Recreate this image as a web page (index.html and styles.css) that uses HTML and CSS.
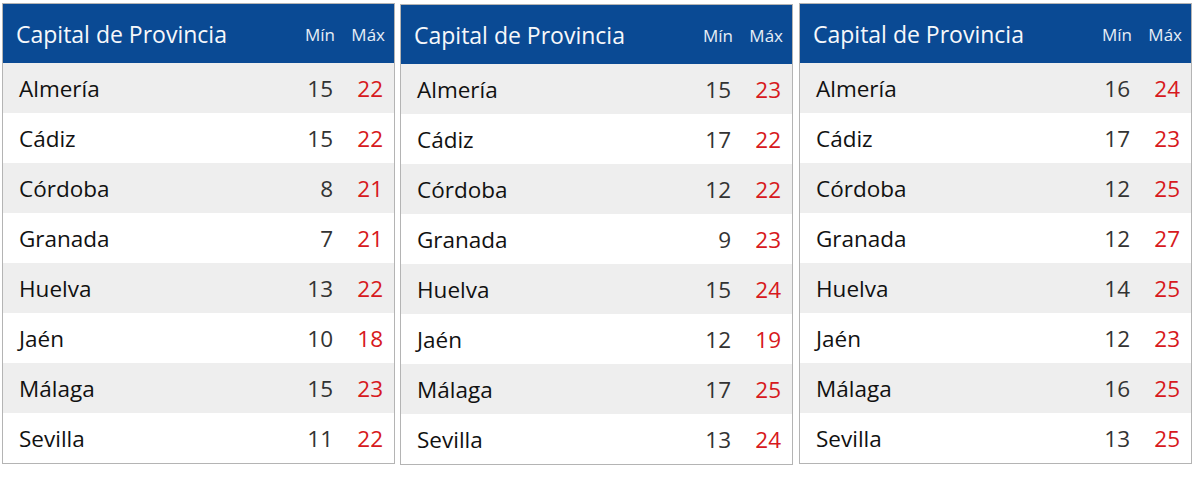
FILE: index.html
```html
<!DOCTYPE html>
<html lang="es">
<head>
<meta charset="utf-8">
<link rel="stylesheet" href="styles.css">
</head>
<body>
<div class="wrap">
  <div class="table t1">
    <div class="head"><span class="title">Capital de Provincia</span><span class="hmin">Mín</span><span class="hmax">Máx</span></div>
    <div class="row"><span class="city">Almería</span><span class="min">15</span><span class="max">22</span></div>
    <div class="row"><span class="city">Cádiz</span><span class="min">15</span><span class="max">22</span></div>
    <div class="row"><span class="city">Córdoba</span><span class="min">8</span><span class="max">21</span></div>
    <div class="row"><span class="city">Granada</span><span class="min">7</span><span class="max">21</span></div>
    <div class="row"><span class="city">Huelva</span><span class="min">13</span><span class="max">22</span></div>
    <div class="row"><span class="city">Jaén</span><span class="min">10</span><span class="max">18</span></div>
    <div class="row"><span class="city">Málaga</span><span class="min">15</span><span class="max">23</span></div>
    <div class="row"><span class="city">Sevilla</span><span class="min">11</span><span class="max">22</span></div>
  </div>
  <div class="table t2">
    <div class="head"><span class="title">Capital de Provincia</span><span class="hmin">Mín</span><span class="hmax">Máx</span></div>
    <div class="row"><span class="city">Almería</span><span class="min">15</span><span class="max">23</span></div>
    <div class="row"><span class="city">Cádiz</span><span class="min">17</span><span class="max">22</span></div>
    <div class="row"><span class="city">Córdoba</span><span class="min">12</span><span class="max">22</span></div>
    <div class="row"><span class="city">Granada</span><span class="min">9</span><span class="max">23</span></div>
    <div class="row"><span class="city">Huelva</span><span class="min">15</span><span class="max">24</span></div>
    <div class="row"><span class="city">Jaén</span><span class="min">12</span><span class="max">19</span></div>
    <div class="row"><span class="city">Málaga</span><span class="min">17</span><span class="max">25</span></div>
    <div class="row"><span class="city">Sevilla</span><span class="min">13</span><span class="max">24</span></div>
  </div>
  <div class="table t3">
    <div class="head"><span class="title">Capital de Provincia</span><span class="hmin">Mín</span><span class="hmax">Máx</span></div>
    <div class="row"><span class="city">Almería</span><span class="min">16</span><span class="max">24</span></div>
    <div class="row"><span class="city">Cádiz</span><span class="min">17</span><span class="max">23</span></div>
    <div class="row"><span class="city">Córdoba</span><span class="min">12</span><span class="max">25</span></div>
    <div class="row"><span class="city">Granada</span><span class="min">12</span><span class="max">27</span></div>
    <div class="row"><span class="city">Huelva</span><span class="min">14</span><span class="max">25</span></div>
    <div class="row"><span class="city">Jaén</span><span class="min">12</span><span class="max">23</span></div>
    <div class="row"><span class="city">Málaga</span><span class="min">16</span><span class="max">25</span></div>
    <div class="row"><span class="city">Sevilla</span><span class="min">13</span><span class="max">25</span></div>
  </div>
</div>
</body>
</html>
```

FILE: styles.css
```css
html, body {
  margin: 0;
  padding: 0;
  background: #ffffff;
}
body {
  font-family: "Open Sans", "Noto Sans", sans-serif;
}
.wrap {
  display: flex;
  align-items: flex-start;
  padding: 3px 0 0 2px;
  gap: 5px;
}
.table {
  width: 391px;
  border: 1px solid #b4b4b4;
  background: #ffffff;
}
.t2 { margin-top: 1px; }
.t3 { margin-left: 1px; }
.head, .row {
  display: grid;
  grid-template-columns: 1fr 44px 50px;
  align-items: center;
}
.head {
  height: 59px;
  padding: 0 9px 0 13px;
  background: #0a4a94;
  color: #ffffff;
}
.title {
  font-size: 23px;
  color: #f6f8fb;
}
.hmin, .hmax {
  font-size: 17px;
  font-weight: 500;
  text-align: right;
  color: #e6eef7;
  padding-top: 2px;
}
.row {
  height: 50px;
  padding: 0 11px 0 15px;
  font-size: 22.5px;
  color: #111111;
}
.row:nth-child(even) {
  background: #eeeeee;
}
.city {
  padding-left: 1px;
}
.min {
  text-align: right;
  color: #333333;
}
.max {
  text-align: right;
  color: #d71920;
}
```
